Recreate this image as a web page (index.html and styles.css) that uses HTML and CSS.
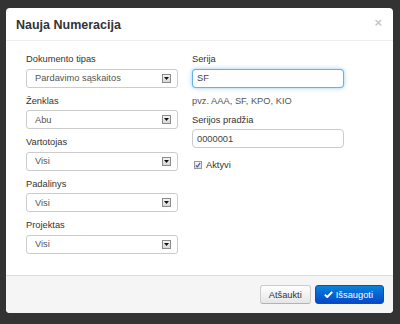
FILE: index.html
```html
<!DOCTYPE html>
<html lang="lt">
<head>
    <meta charset="UTF-8">
    <title>Nauja Numeracija</title>
    <link rel="stylesheet" href="styles.css">
</head>
<body>

    <div class="modal">
        <div class="modal-header">
            <h3>Nauja Numeracija</h3>
            <span class="close">&times;</span>
        </div>

        <div class="modal-body">
            <!-- kairė kolona -->
            <div class="col">
                <div class="field">
                    <label>Dokumento tipas</label>
                    <div class="select"><span class="value">Pardavimo sąskaitos</span><span class="arrow"><svg width="5" height="3" viewBox="0 0 5 3"><path d="M0 0h5L2.5 3z" fill="#111"/></svg></span></div>
                </div>
                <div class="field">
                    <label>Ženklas</label>
                    <div class="select"><span class="value">Abu</span><span class="arrow"><svg width="5" height="3" viewBox="0 0 5 3"><path d="M0 0h5L2.5 3z" fill="#111"/></svg></span></div>
                </div>
                <div class="field">
                    <label>Vartotojas</label>
                    <div class="select"><span class="value">Visi</span><span class="arrow"><svg width="5" height="3" viewBox="0 0 5 3"><path d="M0 0h5L2.5 3z" fill="#111"/></svg></span></div>
                </div>
                <div class="field">
                    <label>Padalinys</label>
                    <div class="select"><span class="value">Visi</span><span class="arrow"><svg width="5" height="3" viewBox="0 0 5 3"><path d="M0 0h5L2.5 3z" fill="#111"/></svg></span></div>
                </div>
                <div class="field">
                    <label>Projektas</label>
                    <div class="select"><span class="value">Visi</span><span class="arrow"><svg width="5" height="3" viewBox="0 0 5 3"><path d="M0 0h5L2.5 3z" fill="#111"/></svg></span></div>
                </div>
            </div>

            <!-- dešinė kolona -->
            <div class="col">
                <div class="field">
                    <label>Serija</label>
                    <input type="text" class="input focus" value="SF">
                </div>
                <p class="help">pvz. AAA, SF, KPO, KIO</p>
                <div class="field">
                    <label>Serijos pradžia</label>
                    <input type="text" class="input" value="0000001">
                </div>
                <div class="check">
                    <span class="box"><svg width="6" height="6" viewBox="0 0 6 6"><path d="M0.8 3.3L2.3 4.8L5.2 0.8" fill="none" stroke="#3a5fb8" stroke-width="1.2"/></svg></span>
                    <span>Aktyvi</span>
                </div>
            </div>
        </div>

        <div class="modal-footer">
            <button class="btn">Atšaukti</button>
            <button class="btn btn-primary"><svg width="9" height="7" viewBox="0 0 9 7"><path d="M0.8 3.6L3.3 6L8.2 0.9" fill="none" stroke="#fff" stroke-width="2"/></svg>Išsaugoti</button>
        </div>
    </div>

</body>
</html>
```

FILE: styles.css
```css
body {
    margin: 0;
    padding: 8px 7px 0 6px;
    background: #333;
    font-family: "Liberation Sans", Arial, sans-serif;
    font-size: 9.3px;
    color: #333;
}
.modal {
    width: 387px;
    height: 305px;
    background: white;
    border-radius: 4px;
    display: flex;
    flex-direction: column;
    overflow: hidden;
}
.modal-header {
    height: 32px;
    border-bottom: 1px solid #eee;
    display: flex;
    align-items: center;
    justify-content: space-between;
    padding: 0 11px 0 10px;
}
.modal-header h3 {
    margin: 0;
    font-size: 12.5px;
    font-weight: bold;
    color: #333;
    padding-top: 2px;
}
.close {
    color: #c8c8c8;
    font-size: 13px;
    font-weight: bold;
    margin-top: -4px;
}
.modal-body {
    flex: 1;
    display: flex;
    gap: 14px;
    padding: 12px 20px 0 20px;
}
.col {
    width: 152px;
}
.field {
    margin-bottom: 7px;
}
label {
    display: block;
    line-height: 12px;
    margin-bottom: 3.5px;
}
.select, .input {
    box-sizing: border-box;
    width: 152px;
    height: 19px;
    border: 1px solid #ccc;
    border-radius: 3px;
    background: white;
    font-family: inherit;
    font-size: 9.3px;
    color: #555;
}
.select {
    display: flex;
    align-items: center;
    padding: 0 6px 0 8px;
}
.select .value {
    flex: 1;
}
.arrow {
    width: 9px;
    height: 9px;
    box-sizing: border-box;
    border: 1px solid #8a8a8a;
    background: linear-gradient(#f4f4f4, #d8d8d8);
    display: flex;
    align-items: center;
    justify-content: center;
}
.input {
    display: block;
    padding: 0 4px;
    border-radius: 4px;
    outline: none;
    color: #444;
}
.input.focus {
    border-color: rgba(82, 168, 236, 0.9);
    box-shadow: 0 0 4px rgba(82, 168, 236, 0.6);
}
.help {
    margin: 0 0 7px 0;
    line-height: 12px;
    color: #555;
}
.check {
    display: flex;
    align-items: center;
    gap: 4px;
    margin-top: 12px;
    padding-left: 2px;
}
.check .box {
    width: 8px;
    height: 8px;
    box-sizing: border-box;
    border: 1px solid #999;
    background: linear-gradient(#f7f7f7, #dcdcdc);
    display: flex;
    align-items: center;
    justify-content: center;
}
.modal-footer {
    height: 37px;
    border-top: 1px solid #ddd;
    background: #f5f5f5;
    display: flex;
    align-items: center;
    justify-content: flex-end;
    gap: 4px;
    padding: 0 9px 0 0;
}
.btn {
    height: 19px;
    padding: 0 8px;
    border: 1px solid #ccc;
    border-bottom-color: #b3b3b3;
    border-radius: 3px;
    background: linear-gradient(#ffffff, #e6e6e6);
    font-family: inherit;
    font-size: 9.3px;
    color: #333;
    display: flex;
    align-items: center;
    gap: 3px;
}
.btn-primary {
    padding: 0 10px 0 8px;
    border-color: #0a4dbb;
    background: linear-gradient(#0a82da, #0448c8);
    color: white;
}
```
